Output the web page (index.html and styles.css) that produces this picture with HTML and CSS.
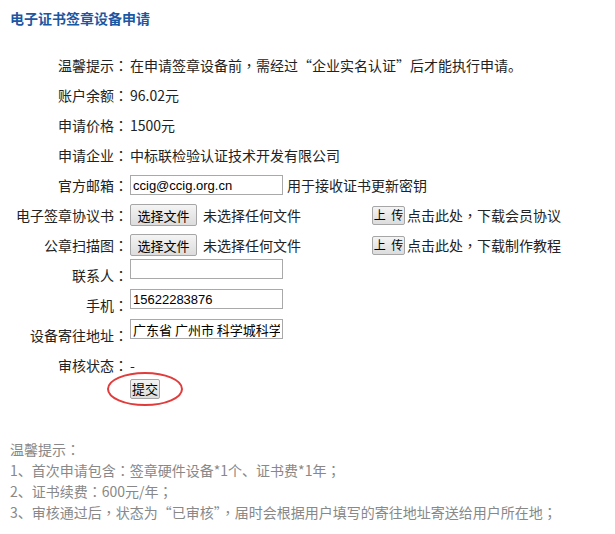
FILE: index.html
```html
<!DOCTYPE html>
<html lang="zh-CN">
<head>
<meta charset="utf-8">
<link rel="stylesheet" href="styles.css">
</head>
<body>
<div class="page">
  <h1 class="title">电子证书签章设备申请</h1>
  <div class="form">
    <div class="row"><span class="label">温馨提示<span class="p" lang="zh-Hant">：</span></span><span class="value">在申请签章设备前<span class="p" lang="zh-Hant">，</span>需经过“企业实名认证”后才能执行申请。</span></div>
    <div class="row"><span class="label">账户余额<span class="p" lang="zh-Hant">：</span></span><span class="value">96.02元</span></div>
    <div class="row"><span class="label">申请价格<span class="p" lang="zh-Hant">：</span></span><span class="value">1500元</span></div>
    <div class="row"><span class="label">申请企业<span class="p" lang="zh-Hant">：</span></span><span class="value">中标联检验认证技术开发有限公司</span></div>
    <div class="row"><span class="label">官方邮箱<span class="p" lang="zh-Hant">：</span></span><input class="field" type="text" value="ccig@ccig.org.cn"><span class="note">用于接收证书更新密钥</span></div>
    <div class="row"><span class="label">电子签章协议书<span class="p" lang="zh-Hant">：</span></span>
      <span class="file"><button class="btn btn-file" type="button">选择文件</button><span class="file-name">未选择任何文件</span></span>
      <button class="btn btn-upload" type="button">上 传</button><span class="link">点击此处<span class="p" lang="zh-Hant">，</span>下载会员协议</span></div>
    <div class="row"><span class="label">公章扫描图<span class="p" lang="zh-Hant">：</span></span>
      <span class="file"><button class="btn btn-file" type="button">选择文件</button><span class="file-name">未选择任何文件</span></span>
      <button class="btn btn-upload" type="button">上 传</button><span class="link">点击此处<span class="p" lang="zh-Hant">，</span>下载制作教程</span></div>
    <div class="row"><span class="label">联系人<span class="p" lang="zh-Hant">：</span></span><input class="field field-top" type="text" value=""></div>
    <div class="row"><span class="label">手机<span class="p" lang="zh-Hant">：</span></span><input class="field field-top" type="text" value="15622283876"></div>
    <div class="row"><span class="label">设备寄往地址<span class="p" lang="zh-Hant">：</span></span><input class="field field-top field-cjk" type="text" value="广东省 广州市 科学城科学大道"></div>
    <div class="row"><span class="label">审核状态<span class="p" lang="zh-Hant">：</span></span><span class="value">-</span></div>
    <div class="submit-row">
      <button class="btn btn-submit" type="button">提交</button>
      <svg class="ring" width="80" height="36" viewBox="0 0 80 36"><ellipse cx="39" cy="17" rx="37" ry="16" fill="none" stroke="#e23b3b" stroke-width="2"/></svg>
    </div>
  </div>
  <div class="hint">
    <div>温馨提示<span class="p" lang="zh-Hant">：</span></div>
    <div>1、首次申请包含<span class="p" lang="zh-Hant">：</span>签章硬件设备*1个、证书费*1年<span class="p" lang="zh-Hant">；</span></div>
    <div>2、证书续费<span class="p" lang="zh-Hant">：</span>600元/年<span class="p" lang="zh-Hant">；</span></div>
    <div>3、审核通过后<span class="p" lang="zh-Hant">，</span>状态为“已审核”<span class="p" lang="zh-Hant">，</span>届时会根据用户填写的寄往地址寄送给用户所在地<span class="p" lang="zh-Hant">；</span></div>
  </div>
</div>
</body>
</html>
```

FILE: styles.css
```css
html, body {
  margin: 0;
  padding: 0;
  background: #fff;
}
body {
  font-family: "Noto Sans CJK SC", sans-serif;
  font-size: 14px;
  color: #222;
}
.p {
  font-family: "Noto Sans CJK TC", "Noto Sans CJK SC", sans-serif;
}
.title {
  margin: 0;
  padding: 10px 0 0 10px;
  font-size: 14px;
  font-weight: bold;
  line-height: 16px;
  color: #1b58a3;
}
.form {
  margin-top: 24px;
}
.row {
  display: flex;
  align-items: center;
  height: 30px;
  line-height: 20px;
}
.label {
  flex: none;
  width: 128px;
  text-align: right;
}
.value {
  margin-left: 2px;
}
.field {
  box-sizing: border-box;
  width: 153px;
  height: 20px;
  margin: 0 0 0 2px;
  padding: 0 2px;
  border: 1px solid #a9a9a9;
  font-family: "Liberation Sans", Arial, sans-serif;
  font-size: 13px;
  color: #000;
  outline: none;
}
.field-top {
  align-self: flex-start;
  margin-top: -1px;
}
.field-cjk {
  font-family: "Noto Sans CJK SC", sans-serif;
  font-size: 13px;
}
.note {
  margin-left: 4px;
}
.file {
  display: flex;
  align-items: center;
  width: 242px;
  margin-left: 2px;
}
.btn {
  box-sizing: border-box;
  border: 1px solid #a6a6a6;
  border-radius: 2px;
  background: linear-gradient(#f4f4f4, #dcdcdc);
  color: #000;
  font-family: "Noto Sans CJK SC", sans-serif;
  padding: 0;
  line-height: 1;
}
.btn-file {
  width: 67px;
  height: 22px;
  font-size: 13px;
}
.file-name {
  margin-left: 6px;
}
.btn-upload {
  width: 33px;
  height: 19px;
  font-size: 12px;
  word-spacing: 3px;
}
.link {
  margin-left: 2px;
}
.submit-row {
  position: relative;
  margin-top: -2px;
  padding-left: 130px;
  height: 20px;
}
.btn-submit {
  width: 30px;
  height: 20px;
  font-size: 13px;
}
.ring {
  position: absolute;
  left: 106px;
  top: -6px;
}
.hint {
  margin-top: 41px;
  padding-left: 10px;
  color: #888;
  line-height: 21px;
}
```
